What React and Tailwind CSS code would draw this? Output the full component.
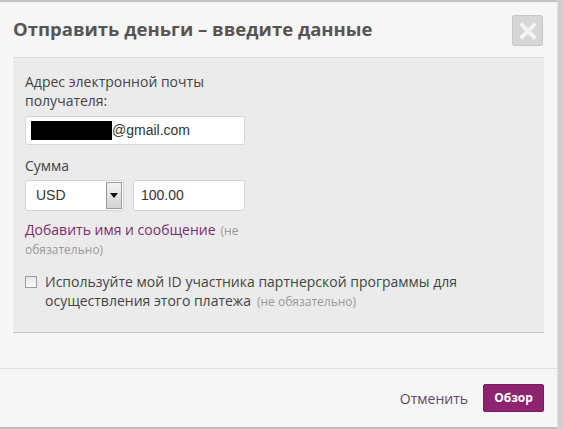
export default function App() {
  return (
    <div className="w-[563px] h-[429px] bg-[#c9c9c9] flex overflow-hidden" style={{ fontFamily: '"Open Sans", "Noto Sans", sans-serif' }}>
      <div className="w-[558px] h-[429px] bg-[#f6f6f6] border-t-2 border-t-[#c4c4c4] border-b-2 border-b-[#bdbdbd] border-r border-r-[#e2e2e2] flex flex-col">
        <div className="h-[56px] mx-[13px] border-b border-[#dcdcdc] flex items-start justify-between pt-[12px]">
          <div className="text-[18.5px] font-bold text-[#555] leading-[28px] mt-[1px]">Отправить деньги – введите данные</div>
          <div className="w-[31px] h-[31px] mt-[1px] bg-[#d6d6d6] border border-[#c8c8c8] rounded-[2px] flex items-center justify-center mr-[1px]">
            <svg width="18" height="18" viewBox="0 0 18 18">
              <path d="M3 3 L15 15 M15 3 L3 15" stroke="#f4f4f4" strokeWidth="4" strokeLinecap="square" />
            </svg>
          </div>
        </div>
        <div className="mx-[13px] h-[275px] bg-[#ebebeb] border-b border-[#c6c6c6] px-[12px] pt-[14px] text-[14px] text-[#444]">
          <div className="leading-[19px]">Адрес электронной почты<br />получателя:</div>
          <div className="mt-[6px] w-[220px] h-[29px] bg-white border border-[#d4d4d4] rounded-[3px] flex items-center pl-[5px]" style={{ fontFamily: '"Liberation Sans", Arial, sans-serif' }}>
            <div className="w-[81px] h-[19px] bg-black"></div>
            <span className="text-[14px] text-[#333]">@gmail.com</span>
          </div>
          <div className="mt-[11px] leading-[19px]">Сумма</div>
          <div className="mt-[5px] flex gap-[9px]">
            <div className="w-[99px] h-[31px] bg-white border border-[#d4d4d4] rounded-[3px] flex items-center justify-between pl-[10px] pr-[1px]" style={{ fontFamily: '"Liberation Sans", Arial, sans-serif' }}>
              <span className="text-[14px] text-[#333]">USD</span>
              <div className="w-[16px] h-[27px] border border-[#9a9a9a] bg-gradient-to-b from-[#f4f4f4] to-[#d2d2d2] flex items-center justify-center">
                <svg width="8" height="5" viewBox="0 0 8 5"><path d="M0 0 L8 0 L4 5 Z" fill="#111" /></svg>
              </div>
            </div>
            <div className="w-[112px] h-[31px] bg-white border border-[#d4d4d4] rounded-[3px] flex items-center pl-[7px]" style={{ fontFamily: '"Liberation Sans", Arial, sans-serif' }}>
              <span className="text-[14px] text-[#333]">100.00</span>
            </div>
          </div>
          <div className="mt-[9px] leading-[20px]">
            <span className="text-[#7b2d6c]">Добавить имя и сообщение</span>
            <span className="text-[12px] text-[#999] ml-[5px]">(не</span>
          </div>
          <div className="text-[12px] text-[#999] leading-[16px] mt-[1px]">обязательно)</div>
          <div className="mt-[14px] flex items-start">
            <div className="w-[12px] h-[12px] mt-[4px] border border-[#9c9c9c] bg-gradient-to-b from-[#e8e8e8] to-[#fafafa] shrink-0"></div>
            <div className="ml-[8px] leading-[19px] text-[14px] text-[#444]">
              Используйте мой ID участника партнерской программы для<br />
              осуществления этого платежа<span className="text-[12px] text-[#999] ml-[6px]">(не обязательно)</span>
            </div>
          </div>
        </div>
        <div className="h-[36px] border-b border-[#dedede]"></div>
        <div className="flex-1 flex items-start justify-end pr-[13px] pt-[15px]">
          <span className="text-[14px] text-[#5c4a60] mt-[4px] mr-[15px]">Отменить</span>
          <div className="w-[61px] h-[28px] bg-[#8d2371] rounded-[2px] border border-[#7a1c61] flex items-center justify-center text-white text-[12px] font-bold">Обзор</div>
        </div>
      </div>
      <div className="flex-1 bg-[#cfcfcf]"></div>
    </div>
  );
}
